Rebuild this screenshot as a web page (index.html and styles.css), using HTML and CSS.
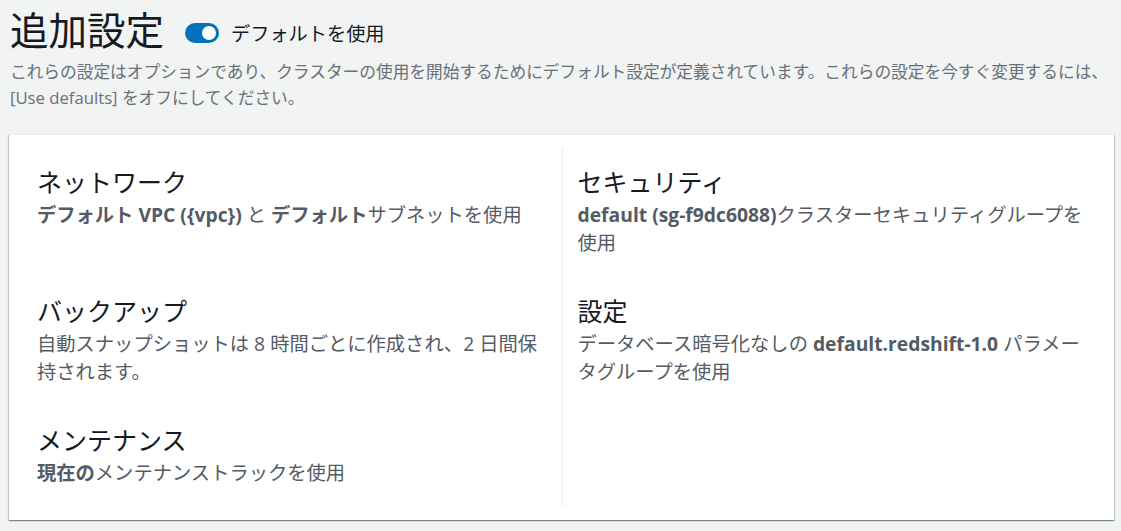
FILE: index.html
```html
<!DOCTYPE html>
<html lang="ja">
<head>
<meta charset="utf-8">
<link rel="stylesheet" href="styles.css">
</head>
<body>
<header class="head">
  <div class="title-row">
    <h1 class="title">追加設定</h1>
    <span class="toggle"><span class="knob"></span></span>
    <span class="toggle-label">デフォルトを使用</span>
  </div>
  <p class="desc">これらの設定はオプションであり、クラスターの使用を開始するためにデフォルト設定が定義されています。これらの設定を今すぐ変更するには、[Use defaults] をオフにしてください。</p>
</header>
<section class="card">
  <div class="cell">
    <h2 class="cell-title">ネットワーク</h2>
    <p class="cell-text"><b>デフォルト VPC ({vpc})</b> と <b>デフォルト</b>サブネットを使用</p>
  </div>
  <div class="cell right">
    <h2 class="cell-title">セキュリティ</h2>
    <p class="cell-text"><b>default (sg-f9dc6088)</b>クラスターセキュリティグループを使用</p>
  </div>
  <div class="cell">
    <h2 class="cell-title">バックアップ</h2>
    <p class="cell-text">自動スナップショットは 8 時間ごとに作成され、2 日間保持されます。</p>
  </div>
  <div class="cell right">
    <h2 class="cell-title">設定</h2>
    <p class="cell-text">データベース暗号化なしの <b>default.redshift-1.0</b> パラメータグループを使用</p>
  </div>
  <div class="cell">
    <h2 class="cell-title">メンテナンス</h2>
    <p class="cell-text"><b>現在の</b>メンテナンストラックを使用</p>
  </div>
  <div class="cell right"></div>
</section>
</body>
</html>
```

FILE: styles.css
```css
html, body {
  margin: 0;
  padding: 0;
}
body {
  background: #f2f3f3;
  font-family: "Open Sans", "Noto Sans CJK JP", sans-serif;
  color: #545b64;
  width: 1121px;
  height: 531px;
  overflow: hidden;
}
.head {
  padding: 8px 10px 0 10px;
}
.title-row {
  display: flex;
  align-items: center;
  height: 44px;
}
.title {
  margin: 0;
  font-size: 38.5px;
  line-height: 44px;
  font-weight: 400;
  color: #16191f;
}
.toggle {
  display: inline-flex;
  justify-content: flex-end;
  align-items: center;
  width: 34px;
  height: 20px;
  border-radius: 10px;
  background: #0073bb;
  margin-left: 21px;
  margin-top: 6px;
  padding: 0 3px;
  box-sizing: border-box;
}
.knob {
  width: 14px;
  height: 14px;
  border-radius: 50%;
  background: #fff;
}
.toggle-label {
  margin-left: 12px;
  margin-top: 5px;
  font-size: 19.2px;
  color: #16191f;
}
.desc {
  margin: 7px 0 0 0;
  font-size: 16.7px;
  line-height: 26px;
  color: #687078;
}
.card {
  margin: 23px 7px 0 9px;
  background: #fff;
  padding: 13px;
  display: grid;
  grid-template-columns: 1fr 1fr;
  box-shadow: 0 1px 1px 0 rgba(0, 28, 36, 0.3), 1px 1px 1px 0 rgba(0, 28, 36, 0.15), -1px 1px 1px 0 rgba(0, 28, 36, 0.15);
  border-top: 1px solid #eaeded;
}
.cell {
  padding: 18px 15px 20px 15px;
}
.cell.right {
  border-left: 1px solid #eaeded;
}
.cell-title {
  margin: 0;
  font-size: 25px;
  line-height: 32px;
  font-weight: 400;
  color: #16191f;
}
.cell-text {
  margin: 3px 0 0 0;
  font-size: 19.3px;
  line-height: 28px;
}
.cell-text b {
  font-weight: 700;
}
```
